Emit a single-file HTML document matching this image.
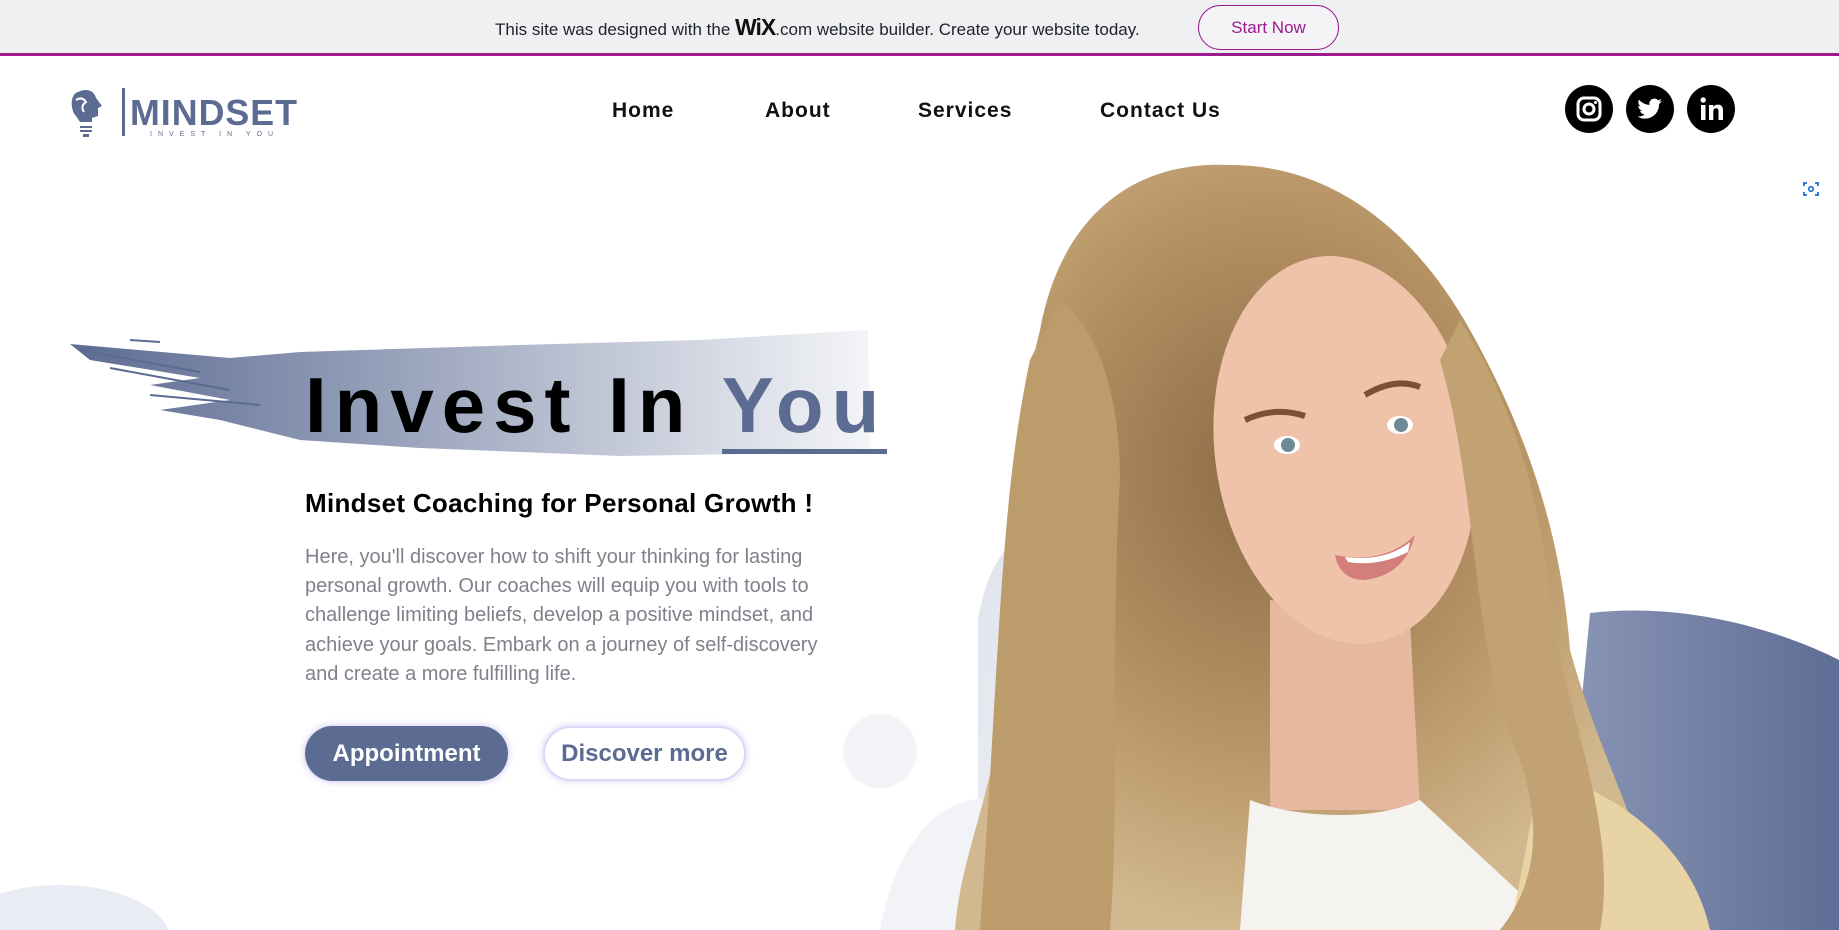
<!DOCTYPE html>
<html><head><meta charset="utf-8"><style>
*{margin:0;padding:0;box-sizing:border-box}
html,body{width:1839px;height:930px;overflow:hidden}
body{background:#fff;font-family:"Liberation Sans",sans-serif;position:relative}
.bar{position:absolute;left:0;top:0;width:1839px;height:56px;background:#eff0f2;border-bottom:3px solid #9b1a8e}
.bar .t{position:absolute;left:495px;top:14px;font-size:17px;color:#20232a}
.bar .t b{font-size:23px;font-weight:900;letter-spacing:-1px;color:#111}
.start{position:absolute;left:1198px;top:5px;width:141px;height:45px;border:1px solid #9b1a8e;border-radius:23px;color:#9b1a8e;font-size:17px;text-align:center;line-height:43px;background:#f4f4f6}
.nav a{position:absolute;top:99px;font-size:21px;font-weight:bold;color:#111;letter-spacing:1px;text-decoration:none}
.soc{position:absolute;top:85px;width:48px;height:48px;border-radius:50%;background:#000}
.abs{position:absolute}
</style></head><body>
<div class="bar"><div class="t">This site was designed with the <b>WiX</b>.com website builder. Create your website today.</div><div class="start">Start Now</div></div>

<svg class="abs" style="left:68px;top:86px" width="240" height="56">
<path d="M10 6 C2 8 2 24 8 30 L12 36 L24 36 L24 32 L30 30 L30 22 L34 20 L28 12 C26 4 18 2 10 6Z" fill="#5c6b92"/>
<path d="M8 14 q6 -4 10 2 q-6 4 -2 10" stroke="#fff" stroke-width="2" fill="none"/>
<rect x="12" y="40" width="12" height="2" fill="#5c6b92"/><rect x="12" y="44" width="12" height="2" fill="#5c6b92"/><rect x="15" y="48" width="6" height="3" fill="#5c6b92"/>
<rect x="54" y="2" width="3" height="48" fill="#5c6b92"/>
<text x="62" y="39" font-family="Liberation Sans" font-size="36" font-weight="bold" fill="#5c6b92" letter-spacing="1" textLength="168" lengthAdjust="spacingAndGlyphs">MINDSET</text>
<text x="82" y="50" font-family="Liberation Sans" font-size="7" fill="#5c6b92" letter-spacing="6">INVEST IN YOU</text>
</svg>

<div class="nav"><a style="left:612px">Home</a><a style="left:765px">About</a><a style="left:918px">Services</a><a style="left:1100px">Contact Us</a></div>

<div class="soc" style="left:1565px"><svg width="48" height="48"><rect x="13" y="13" width="22" height="22" rx="6" stroke="#fff" stroke-width="3" fill="none"/><circle cx="24" cy="24" r="5" stroke="#fff" stroke-width="3" fill="none"/><circle cx="30.5" cy="17.5" r="1.5" fill="#fff"/></svg></div>
<div class="soc" style="left:1626px"><svg width="48" height="48"><path d="M36 16 c-1 .5-2 .8-3 1 1-.7 2-1.7 2.3-3-1 .6-2 1-3.2 1.3a5 5 0 0 0-8.6 4.6C19 19.6 15.4 17.6 13 14.6c-1.4 2.4-.6 5.4 1.6 6.8-.8 0-1.6-.3-2.3-.6 0 2.5 1.7 4.6 4 5-.7.2-1.5.3-2.3.1.6 2 2.5 3.5 4.7 3.5A10 10 0 0 1 11.5 31.5 14 14 0 0 0 33 19.5V19c1.2-.8 2.2-1.8 3-3z" fill="#fff"/></svg></div>
<div class="soc" style="left:1687px"><svg width="48" height="48"><rect x="14" y="20" width="4.5" height="15" fill="#fff"/><circle cx="16.2" cy="15" r="2.7" fill="#fff"/><path d="M22 20h4.3v2c1-1.6 2.7-2.4 4.7-2.4 3.5 0 5 2.2 5 6V35h-4.5v-8.5c0-2-.6-3.2-2.4-3.2-2 0-2.8 1.4-2.8 3.4V35H22z" fill="#fff"/></svg></div>

<svg class="abs" style="left:1795px;top:173px" width="32" height="32"><circle cx="16" cy="16" r="15" fill="#fff"/><path d="M9 13v-3h3M20 10h3v3M23 19v3h-3M12 22H9v-3" stroke="#1a6fd6" stroke-width="1.8" fill="none"/><circle cx="16" cy="16" r="2.3" stroke="#1a6fd6" stroke-width="1.6" fill="none"/></svg>

<svg class="abs" style="left:0;top:0" width="1839" height="930">
<defs>
<linearGradient id="br" x1="0" x2="1"><stop offset="0" stop-color="#5c6b92"/><stop offset="0.35" stop-color="#8f9ab5"/><stop offset="1" stop-color="#f4f5f8"/></linearGradient>
<linearGradient id="bl" x1="0" x2="1"><stop offset="0" stop-color="#8a96b6"/><stop offset="1" stop-color="#5e6d95"/></linearGradient>
<linearGradient id="gr" x1="0" x2="1" y1="0" y2="1"><stop offset="0" stop-color="#dfe3ec"/><stop offset="1" stop-color="#f7f8fa"/></linearGradient>
<radialGradient id="hair" cx="0.45" cy="0.4" r="0.6"><stop offset="0" stop-color="#8a6a45"/><stop offset="0.6" stop-color="#b89566"/><stop offset="1" stop-color="#d2b88e"/></radialGradient>
</defs>
<path d="M70 344 L230 358 L300 352 L520 345 L700 340 L868 330 L870 452 L620 456 L420 448 L300 440 L220 420 L160 410 L230 400 L150 385 L200 378 L90 360 Z" fill="url(#br)"/>
<path d="M80 350 L200 372 M110 368 L230 390 M150 395 L260 405 M130 340 L160 342" stroke="#5c6b92" stroke-width="2"/>
<circle cx="880" cy="751" r="37" fill="#f3f4f7"/>
<ellipse cx="60" cy="940" rx="110" ry="55" fill="#e9ecf2"/>
<path d="M978 930 L978 620 C990 540 1040 500 1100 540 L1200 930Z" fill="url(#gr)"/>
<path d="M880 930 C900 820 960 790 1000 800 L1050 930Z" fill="#f2f3f6"/>
<path d="M1590 613 C1700 600 1800 640 1839 660 L1839 930 L1560 930 Z" fill="url(#bl)"/>
<path d="M1040 330 C1060 220 1130 160 1230 165 C1340 165 1420 240 1470 330 C1520 420 1560 520 1570 650 C1600 760 1650 840 1660 930 L955 930 C960 860 990 800 1000 720 C1000 600 1010 450 1040 330Z" fill="url(#hair)"/>
<path d="M1270 600 L1270 810 L1420 810 L1410 620Z" fill="#e6b8a0"/>
<ellipse cx="1345" cy="450" rx="130" ry="195" fill="#eec3aa" transform="rotate(-8 1345 450)"/>
<path d="M1245 420 q30 -14 60 -4 M1365 395 q30 -18 55 -8" stroke="#7a5136" stroke-width="6" fill="none"/>
<ellipse cx="1287" cy="445" rx="13" ry="9" fill="#fff"/><circle cx="1288" cy="445" r="7" fill="#6c8a95"/>
<ellipse cx="1400" cy="425" rx="13" ry="9" fill="#fff"/><circle cx="1401" cy="425" r="7" fill="#6c8a95"/>
<path d="M1335 555 q50 10 80 -20 q-10 40 -50 45 q-25 0 -30 -25z" fill="#d37e7a"/>
<path d="M1345 557 q40 5 65 -15 l-2 10 q-30 15 -60 10z" fill="#fff"/>
<path d="M1240 930 L1250 800 C1300 820 1380 820 1420 800 L1560 930Z" fill="#f4f3f0"/>
<path d="M1540 770 C1610 790 1690 840 1710 930 L1510 930 C1520 880 1530 830 1540 770Z" fill="#e8d3a4"/>
<path d="M1030 360 C1000 500 1000 650 980 930 L1110 930 C1120 800 1110 650 1120 480 C1120 400 1100 330 1060 300Z" fill="#bd9c6c"/>
<path d="M1440 360 C1480 500 1470 650 1520 760 C1540 820 1540 880 1500 930 L1600 930 C1620 820 1560 700 1550 600 C1540 480 1500 380 1460 320Z" fill="#c2a273"/>
</svg>

<div class="abs" style="left:305px;top:366px;font-size:78px;font-weight:bold;letter-spacing:8px;color:#000;line-height:1">Invest In <span style="color:#5c6b92;border-bottom:5px solid #5c6b92">You</span></div>
<div class="abs" style="left:305px;top:488px;font-size:26px;font-weight:bold;color:#000;letter-spacing:0.3px">Mindset Coaching for Personal Growth !</div>
<div class="abs" style="left:305px;top:543px;width:548px;font-size:20px;line-height:29.2px;color:#80808c">Here, you'll discover how to shift your thinking for lasting personal growth. Our coaches will equip you with tools to challenge limiting beliefs, develop a positive mindset, and achieve your goals. Embark on a journey of self-discovery and create a more fulfilling life.</div>
<div class="abs" style="left:305px;top:726px;width:203px;height:55px;border-radius:28px;background:#5c6b92;color:#fff;font-size:24px;font-weight:bold;text-align:center;line-height:55px;box-shadow:0 0 8px #c9c0f0">Appointment</div>
<div class="abs" style="left:543px;top:726px;width:203px;height:55px;border-radius:28px;background:#fff;border:2px solid #ddd6f8;color:#5c6b92;font-size:24px;font-weight:bold;text-align:center;line-height:51px;box-shadow:0 0 8px #d6cff5">Discover more</div>
</body></html>
